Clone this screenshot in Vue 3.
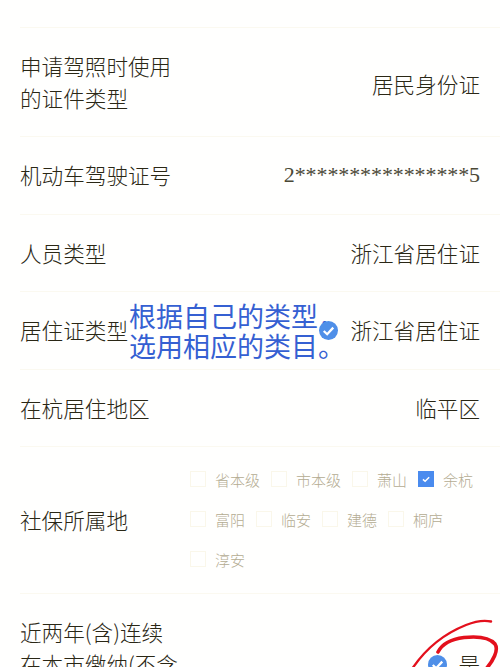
<script setup>
const regions = [
  { name: '省本级' }, { name: '市本级' }, { name: '萧山' }, { name: '余杭', checked: true },
  { name: '富阳' }, { name: '临安' }, { name: '建德' }, { name: '桐庐' }, { name: '淳安' }
]
</script>

<template>
  <div class="page">
    <div class="form">
      <div class="row row-tall">
        <div class="label">申请驾照时使用<br />的证件类型</div>
        <div class="value">居民身份证</div>
      </div>
      <div class="row">
        <div class="label">机动车驾驶证号</div>
        <div class="value serif">2****************5</div>
      </div>
      <div class="row">
        <div class="label">人员类型</div>
        <div class="value">浙江省居住证</div>
      </div>
      <div class="row">
        <div class="label">居住证类型</div>
        <div class="value">浙江省居住证</div>
        <div class="note">根据自己的类型，<br />选用相应的类目。</div>
        <svg class="note-check" viewBox="0 0 20 20">
          <circle cx="10" cy="10" r="10" fill="#4f8fe8" />
          <path d="M5 10.5l3.6 3.4L15 7" fill="none" stroke="#fff" stroke-width="2.4" />
        </svg>
      </div>
      <div class="row">
        <div class="label">在杭居住地区</div>
        <div class="value">临平区</div>
      </div>
      <div class="row row-social">
        <div class="label">社保所属地</div>
        <div class="options">
          <div v-for="r in regions" :key="r.name" class="option">
            <span class="box" :class="{ checked: r.checked }">
              <svg v-if="r.checked" viewBox="0 0 16 16">
                <path d="M4.5 8.4l2.5 2.2L11.6 6" fill="none" stroke="#fff" stroke-width="1.7" />
              </svg>
            </span>
            <span class="opt-text">{{ r.name }}</span>
          </div>
        </div>
      </div>
      <div class="row row-last">
        <div class="label">近两年(含)连续<br />在本市缴纳(不含</div>
        <div class="answer">
          <svg class="answer-check" viewBox="0 0 20 20">
            <circle cx="10" cy="10" r="10" fill="#4f8fe8" />
            <path d="M5 10.5l3.6 3.4L15 7" fill="none" stroke="#fff" stroke-width="2.4" />
          </svg>
          <span class="value">是</span>
        </div>
        <svg class="scribble" viewBox="0 0 120 67">
          <path d="M32 68C48 44 66 32 86 24C96 20 104 19 111 20.5" fill="none" stroke="#e3101c" stroke-width="2.4" stroke-linecap="round" />
          <path d="M58 51C62 43 72 38 84 36.5C98 35 110 37 115 43C119 49 113 60 106 68" fill="none" stroke="#e3101c" stroke-width="3.6" stroke-linecap="round" />
        </svg>
      </div>
    </div>
  </div>
</template>

<style>
html, body { margin: 0; background: #fff; }
</style>

<style scoped>
.page {
  width: 500px;
  height: 667px;
  overflow: hidden;
  background: #fffffe;
  padding-top: 27px;
  box-sizing: border-box;
  font-family: "Noto Sans CJK SC", "Noto Sans", sans-serif;
  font-weight: 300;
  color: #2a2715;
  position: relative;
}
.form { margin-left: 20px; }
.row {
  position: relative;
  height: 77.5px;
  box-sizing: border-box;
  border-top: 1px solid #fbf9f0;
  padding-right: 20px;
  display: flex;
  align-items: center;
  justify-content: space-between;
  font-size: 21.6px;
}
.row-tall { height: 109px; }
.row-tall .value { margin-top: 4px; }
.row-social { height: 147px; }
.row-last { height: 140px; align-items: flex-start; padding-top: 22px; }
.label { line-height: 32px; white-space: nowrap; }
.value { line-height: 32px; white-space: nowrap; }
.serif {
  font-family: "Liberation Serif", serif;
  font-weight: 400;
  font-size: 22px;
  letter-spacing: -0.1px;
  color: #4a4836;
}
.note {
  position: absolute;
  left: 109px;
  top: 9px;
  font-size: 27px;
  font-weight: 400;
  line-height: 30px;
  color: #3560d2;
  white-space: nowrap;
}
.note-check {
  position: absolute;
  left: 299px;
  top: 29px;
  width: 19px;
  height: 19px;
}
.options {
  width: 290px;
  margin-bottom: 2px;
  display: flex;
  flex-wrap: wrap;
  align-content: center;
  row-gap: 17px;
  column-gap: 11px;
}
.option {
  display: flex;
  align-items: center;
  gap: 9px;
  height: 23px;
}
.box {
  width: 16px;
  height: 16px;
  box-sizing: border-box;
  border: 1px solid #faf7ea;
  display: block;
}
.box.checked {
  background: #4a8bee;
  border-color: #4a8bee;
}
.box svg { display: block; width: 14px; height: 14px; }
.opt-text {
  font-size: 15px;
  line-height: 23px;
  color: #b4ac92;
}
.row-last .answer {
  position: absolute;
  right: 20px;
  top: 54px;
  display: flex;
  align-items: center;
  gap: 11px;
}
.answer-check { width: 19px; height: 19px; }
.scribble {
  position: absolute;
  left: 360px;
  top: 7px;
  width: 120px;
  height: 67px;
  overflow: visible;
}
</style>
